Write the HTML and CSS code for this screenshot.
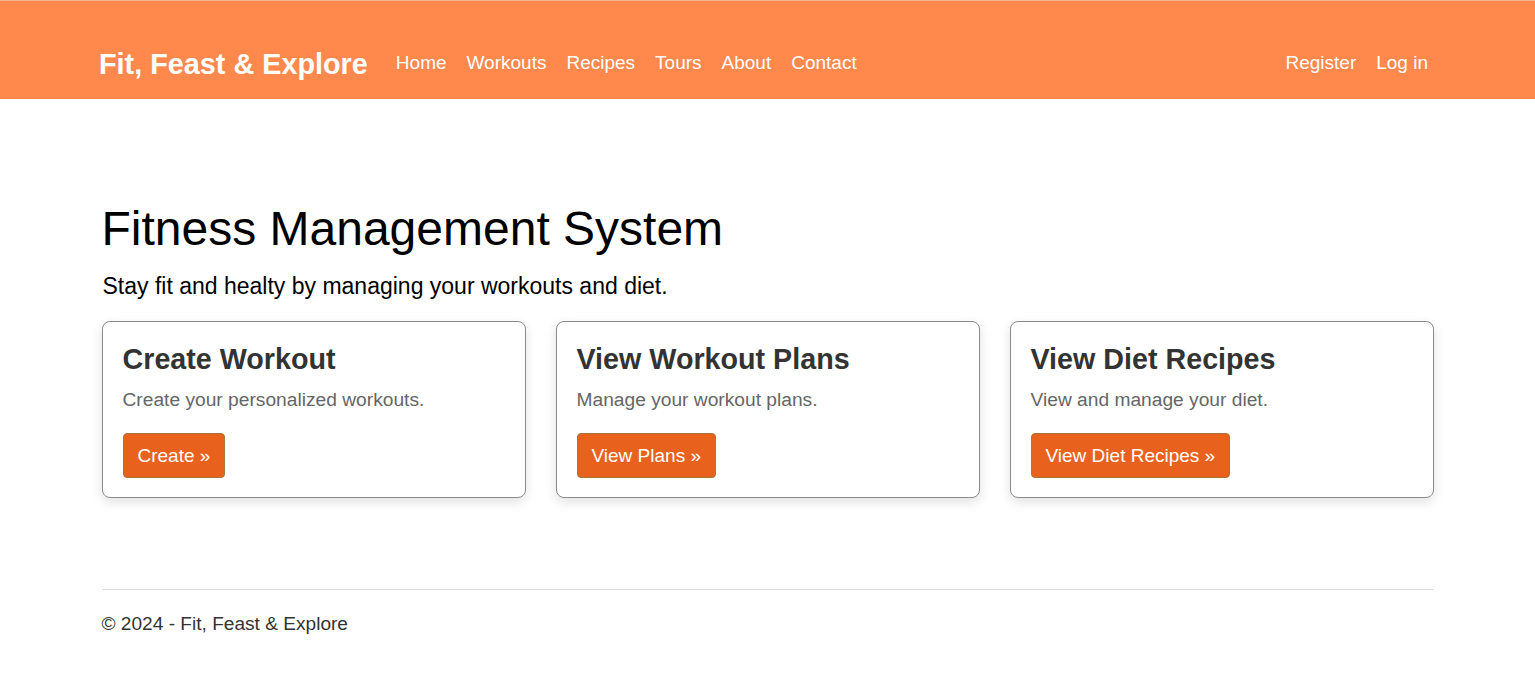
FILE: index.html
```html
<!DOCTYPE html>
<html lang="en">
<head>
<meta charset="utf-8">
<title>Fit, Feast &amp; Explore</title>
<link rel="stylesheet" href="styles.css">
</head>
<body>
<header class="navbar">
  <div class="nav-inner">
    <a class="brand" href="#">Fit, Feast &amp; Explore</a>
    <nav class="nav-links">
      <a href="#">Home</a>
      <a href="#">Workouts</a>
      <a href="#">Recipes</a>
      <a href="#">Tours</a>
      <a href="#">About</a>
      <a href="#">Contact</a>
    </nav>
    <nav class="nav-auth">
      <a href="#">Register</a>
      <a href="#">Log in</a>
    </nav>
  </div>
</header>
<main class="container">
  <section class="hero">
    <h1 class="title">Fitness Management System</h1>
    <p class="lead">Stay fit and healty by managing your workouts and diet.</p>
  </section>
  <section class="cards">
    <div class="card">
      <h2 class="card-title">Create Workout</h2>
      <p class="card-text">Create your personalized workouts.</p>
      <a class="btn" href="#">Create &raquo;</a>
    </div>
    <div class="card">
      <h2 class="card-title">View Workout Plans</h2>
      <p class="card-text">Manage your workout plans.</p>
      <a class="btn" href="#">View Plans &raquo;</a>
    </div>
    <div class="card">
      <h2 class="card-title">View Diet Recipes</h2>
      <p class="card-text">View and manage your diet.</p>
      <a class="btn" href="#">View Diet Recipes &raquo;</a>
    </div>
  </section>
  <footer class="footer">
    <p>&copy; 2024 - Fit, Feast &amp; Explore</p>
  </footer>
</main>
</body>
</html>
```

FILE: styles.css
```css
* { box-sizing: border-box; }
body {
  margin: 0;
  font-family: "Liberation Sans", Arial, sans-serif;
  background: #fff;
  color: #000;
}
a { text-decoration: none; }
.navbar {
  background: #ff884d;
  height: 99px;
  border-top: 1px solid #f7b48f;
}
.nav-inner {
  height: 100%;
  padding: 26px 107px 0 99px;
  display: flex;
  align-items: center;
}
.brand {
  color: #fff;
  font-weight: bold;
  font-size: 28.8px;
  margin-right: 28px;
  padding-top: 2px;
}
.nav-links, .nav-auth {
  display: flex;
  gap: 20px;
}
.nav-links a, .nav-auth a {
  color: #fff;
  font-size: 19px;
}
.nav-auth { margin-left: auto; }
.container {
  width: 1332px;
  margin: 0 auto;
}
.hero { padding-top: 100px; }
.title {
  font-weight: normal;
  font-size: 48px;
  margin: 0;
  line-height: 60px;
}
.lead {
  font-size: 23px;
  margin: 14px 0 0 1px;
  line-height: 26px;
}
.cards {
  display: grid;
  grid-template-columns: repeat(3, 1fr);
  gap: 30px;
  margin-top: 22px;
}
.card {
  border: 1px solid #8a8a8a;
  border-radius: 8px;
  box-shadow: 0 4px 12px rgba(0,0,0,0.12);
  padding: 18px 20px 19px;
  background: #fff;
}
.card-title {
  font-size: 28.7px;
  font-weight: bold;
  color: #333;
  margin: 0;
  line-height: 38px;
}
.card-text {
  font-size: 19.2px;
  color: #666;
  margin: 10px 0 0;
  line-height: 24px;
}
.btn {
  display: inline-block;
  margin-top: 21px;
  background: #e8621e;
  border: 1px solid #a5783a;
  border-radius: 4px;
  color: #fff;
  font-size: 19px;
  padding: 10px 14px 9px;
  line-height: 24px;
}
.footer {
  margin-top: 91px;
  border-top: 1px solid #ddd;
}
.footer p {
  margin: 23px 0 0;
  font-size: 19.1px;
  color: #333;
}
```
